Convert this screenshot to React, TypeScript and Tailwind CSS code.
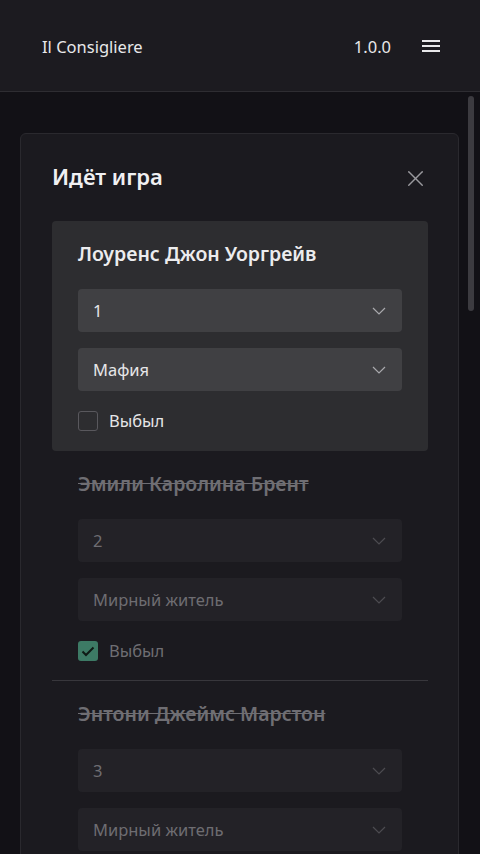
import { X } from 'lucide-react'

interface Player {
  name: string
  seat: string
  role: string
  out: boolean
  active?: boolean
}

const players: Player[] = [
  { name: 'Лоуренс Джон Уоргрейв', seat: '1', role: 'Мафия', out: false, active: true },
  { name: 'Эмили Каролина Брент', seat: '2', role: 'Мирный житель', out: true },
  { name: 'Энтони Джеймс Марстон', seat: '3', role: 'Мирный житель', out: true },
]

function Chevron() {
  return (
    <svg width="14" height="8" viewBox="0 0 14 8" fill="none">
      <path d="M1 1l6 6 6-6" stroke="currentColor" strokeWidth="1.2" />
    </svg>
  )
}

function Select({ value, active }: { value: string; active?: boolean }) {
  return (
    <div
      className={
        active
          ? 'h-[43px] rounded flex items-center justify-between pl-[15px] pr-[16px] bg-[#404043] text-[#e6e6e8]'
          : 'h-[43px] rounded flex items-center justify-between pl-[15px] pr-[16px] bg-[#232227] text-[#6e6d72]'
      }
    >
      <span className="text-[16.5px] pt-[2px]">{value}</span>
      <span className={active ? 'text-[#a9a9ad]' : 'text-[#4d4c51]'}>
        <Chevron />
      </span>
    </div>
  )
}

function PlayerBlock({ p, last }: { p: Player; last?: boolean }) {
  const wrap = p.active
    ? 'bg-[#2d2d30] rounded px-[26px] pt-[22px] pb-[20px]'
    : last
      ? 'px-[26px] pt-[22px] pb-[20px]'
      : 'px-[26px] pt-[22px] pb-[19px] border-b border-[#38373c]'
  return (
    <div className={wrap}>
      <div
        className={
          p.active
            ? 'h-[22px] flex items-center text-[19.5px] font-semibold text-[#ececee]'
            : 'h-[22px] flex items-center text-[19.5px] font-semibold text-[#6f6e73] line-through'
        }
      >
        {p.name}
      </div>
      <div className="mt-[24px] flex flex-col gap-[16px]">
        <Select value={p.seat} active={p.active} />
        <Select value={p.role} active={p.active} />
      </div>
      <div className="mt-[20px] h-[20px] flex items-center gap-[11px]">
        {p.out ? (
          <div className="w-[20px] h-[20px] rounded-[3px] bg-[#3d7a65] flex items-center justify-center">
            <svg width="14" height="11" viewBox="0 0 14 11" fill="none">
              <path d="M1.5 5.5l3.5 3.5 7.5-7.5" stroke="#0f1a15" strokeWidth="2" />
            </svg>
          </div>
        ) : (
          <div className="w-[20px] h-[20px] rounded-[3px] border border-[#59585d]" />
        )}
        <span className={p.active ? 'text-[16.5px] text-[#e6e6e8] pt-[1px]' : 'text-[16.5px] text-[#6f6e73] pt-[1px]'}>
          Выбыл
        </span>
      </div>
    </div>
  )
}

export default function App() {
  return (
    <div
      className="h-[854px] flex flex-col overflow-hidden bg-[#121116]"
      style={{ fontFamily: '"Noto Sans", "Open Sans", sans-serif' }}
    >
      {/* шапка */}
      <header className="h-[92px] flex-shrink-0 flex items-center justify-between pl-[42px] pr-[40px] bg-[#1c1b20] border-b border-[#2e2d32]">
        <span className="text-[16.5px] text-[#e8e8ea] pt-[3px]">Il Consigliere</span>
        <div className="flex items-center gap-[31px]">
          <span className="text-[16.5px] text-[#e8e8ea] pt-[3px]">1.0.0</span>
          <svg width="18" height="14" viewBox="0 0 18 14" fill="none">
            <path d="M0 2h18M0 7h18M0 12h18" stroke="#e8e8ea" strokeWidth="2" />
          </svg>
        </div>
      </header>

      {/* контент */}
      <div className="relative flex-1 overflow-hidden">
        <div className="pl-[20px] pr-[21px] pt-[41px]">
          <div className="bg-[#1b1a1f] border border-[#2a292e] rounded-md pl-[31px] pr-[30px] pt-[29px]">
            <div className="h-[30px] flex items-center justify-between">
              <h1 className="text-[22px] font-semibold text-[#f0f0f2] pb-[3px]">Идёт игра</h1>
              <X className="w-[27px] h-[27px] text-[#9a999e] -mr-[1px]" strokeWidth={1.3} />
            </div>
            <div className="mt-[28px]">
              {players.map((p, i) => (
                <PlayerBlock key={p.name} p={p} last={i === players.length - 1} />
              ))}
            </div>
          </div>
        </div>
        {/* полоса прокрутки */}
        <div className="absolute right-[6px] top-[4px] w-[6px] h-[215px] rounded-full bg-[#3c3b40]" />
      </div>
    </div>
  )
}
